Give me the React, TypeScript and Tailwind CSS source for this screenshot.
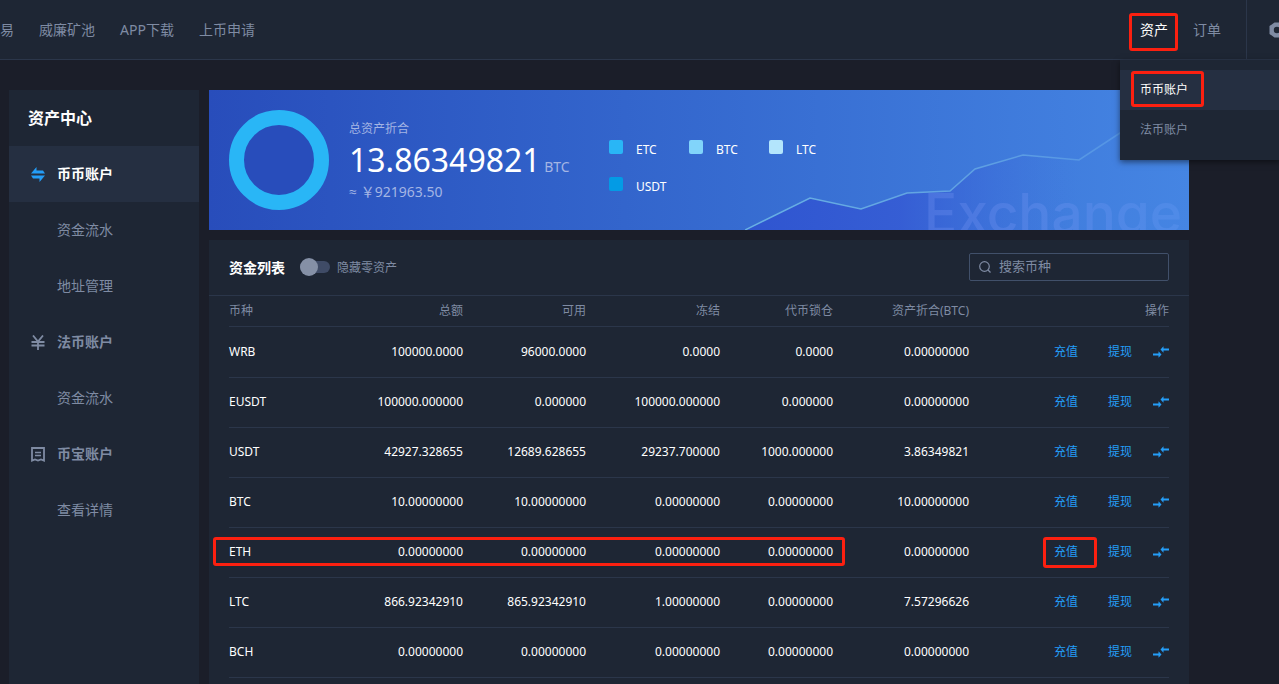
const navLinks = ["易", "威廉矿池", "APP下载", "上币申请"];

type Asset = { coin: string; values: string[]; marked?: boolean };

const assets: Asset[] = [
  { coin: "WRB", values: ["100000.0000", "96000.0000", "0.0000", "0.0000", "0.00000000"] },
  { coin: "EUSDT", values: ["100000.000000", "0.000000", "100000.000000", "0.000000", "0.00000000"] },
  { coin: "USDT", values: ["42927.328655", "12689.628655", "29237.700000", "1000.000000", "3.86349821"] },
  { coin: "BTC", values: ["10.00000000", "10.00000000", "0.00000000", "0.00000000", "10.00000000"] },
  { coin: "ETH", values: ["0.00000000", "0.00000000", "0.00000000", "0.00000000", "0.00000000"], marked: true },
  { coin: "LTC", values: ["866.92342910", "865.92342910", "1.00000000", "0.00000000", "7.57296626"] },
  { coin: "BCH", values: ["0.00000000", "0.00000000", "0.00000000", "0.00000000", "0.00000000"] },
];

const legend = [
  { name: "ETC", color: "bg-[#29b6f6]" },
  { name: "BTC", color: "bg-[#81d4fa]" },
  { name: "LTC", color: "bg-[#b3e5fc]" },
  { name: "USDT", color: "bg-[#039be5]" },
];

const headings = ["总额", "可用", "冻结", "代币锁仓", "资产折合(BTC)", "操作"];

function SwapIcon() {
  return (
    <svg viewBox="0 0 14 15" className="h-[15px] w-[14px]" fill="currentColor" aria-hidden="true">
      <path d="M0 6.5 5.5 0V3.5H12L14 6.5Z" />
      <path d="M14 8.5 8.5 15V11.5H2L0 8.5Z" />
    </svg>
  );
}

function YuanIcon() {
  return (
    <svg viewBox="0 0 14 15" className="h-[15px] w-[14px]" fill="none" stroke="currentColor" strokeWidth="1.8" aria-hidden="true">
      <path d="M2 .5 7 6.5 12 .5M7 6.5V15M.5 7H13.5M.5 10.5H13.5" />
    </svg>
  );
}

function ReceiptIcon() {
  return (
    <svg viewBox="0 0 14 15" className="h-[15px] w-[14px]" fill="none" stroke="currentColor" strokeWidth="1.8" aria-hidden="true">
      <path d="M1 1H13V13.6L10 12.4 7 13.6 4 12.4 1 13.6Z" />
      <path d="M4 5.5H10M4 8.5H10" strokeWidth="1.3" />
    </svg>
  );
}

function TransferIcon() {
  return (
    <svg viewBox="0 0 16 12" className="h-3 w-4" fill="currentColor" aria-hidden="true">
      <path d="M7.5 3.5 10.5 .3V2.5H16V4.5H10.5V6.7Z" />
      <path d="M8.5 8.5 5.5 5.3V7.5H0V9.5H5.5V11.7Z" />
    </svg>
  );
}

const menu = [
  { label: "币币账户", icon: <SwapIcon />, active: true },
  { label: "资金流水" },
  { label: "地址管理" },
  { label: "法币账户", icon: <YuanIcon /> },
  { label: "资金流水" },
  { label: "币宝账户", icon: <ReceiptIcon /> },
  { label: "查看详情" },
];

function Mark({ className }: { className: string }) {
  return <span className={`pointer-events-none absolute rounded-[3px] border-3 border-[#fc2010] ${className}`} />;
}

function Header() {
  return (
    <header className="relative z-10 flex h-[60px] items-stretch justify-between border-b border-[#2b364a] bg-[#1e2634] text-sm text-[#7f8ba3]">
      <nav className="flex items-center gap-[25px]">
        {navLinks.map((label) => (
          <a key={label} href="#">{label}</a>
        ))}
      </nav>
      <div className="flex">
        <div className="relative flex items-center">
          <Mark className="top-[13px] -left-[11px] h-[38px] w-[49px]" />
          <a href="#" className="text-white">资产</a>
          <div className="absolute top-[60px] -left-5 w-[160px] bg-[#1e2634] py-[10px] text-xs shadow-[0_2px_6px_rgba(0,0,0,0.5)]">
            <a href="#" className="relative flex h-10 items-center bg-[#252f41] px-5 text-white">
              <Mark className="top-px left-[11px] h-9 w-[73px]" />
              币币账户
            </a>
            <a href="#" className="flex h-10 items-center px-5">法币账户</a>
          </div>
        </div>
        <a href="#" className="flex items-center px-[25px]">订单</a>
        <button type="button" aria-label="设置" className="flex w-[33px] items-center overflow-hidden border-l border-[#2b364a] pl-[22px]">
          <svg viewBox="0 0 16 16" className="h-4 w-4 shrink-0" aria-hidden="true">
            <path fill="currentColor" fillRule="evenodd" d="M5.5 .5H10.5L15.5 4V12L10.5 15.5H5.5L.5 12V4ZM8 4.8A3.2 3.2 0 1 0 8 11.2 3.2 3.2 0 1 0 8 4.8Z" />
          </svg>
        </button>
      </div>
    </header>
  );
}

function Sidebar() {
  return (
    <aside className="w-[190px] shrink-0 bg-[#1e2634]">
      <h1 className="flex h-14 items-center pl-[19px] text-base font-bold text-white">资产中心</h1>
      <nav className="text-sm">
        {menu.map((item, i) => (
          <a
            key={i}
            href="#"
            className={`flex h-14 items-center pl-[22px] ${item.icon ? "font-bold" : ""} ${item.active ? "bg-[#252f41] text-white" : "text-[#7f8ba3]"}`}
          >
            <span className={`mr-3 w-[14px] ${item.active ? "text-[#249df7]" : ""}`}>{item.icon}</span>
            {item.label}
          </a>
        ))}
      </nav>
    </aside>
  );
}

function Summary() {
  return (
    <section className="relative flex h-[140px] items-center overflow-hidden bg-linear-to-r from-[#284dbb] to-[#4585e3] pl-5">
      <svg viewBox="0 0 444 140" className="absolute right-0 bottom-0 h-[140px] w-[444px]" aria-hidden="true">
        <defs>
          <linearGradient id="area" x1="0" x2="1" y1="0" y2="0">
            <stop offset="0" stopColor="#2f55d0" />
            <stop offset="0.35" stopColor="#355bd4" stopOpacity="0.9" />
            <stop offset="0.75" stopColor="#3f70dc" stopOpacity="0" />
          </linearGradient>
          <linearGradient id="line" x1="0" x2="1" y1="0" y2="0">
            <stop offset="0" stopColor="#67b0e4" />
            <stop offset="0.4" stopColor="#62a4e2" />
            <stop offset="1" stopColor="#4f8fe6" />
          </linearGradient>
          <linearGradient id="word" x1="0" x2="1" y1="0" y2="0">
            <stop offset="0" stopColor="#4a72de" />
            <stop offset="0.5" stopColor="#5084e4" />
            <stop offset="1" stopColor="#4f8be8" />
          </linearGradient>
        </defs>
        <path d="M0 140 65 108 116 119 162 103 205 101 230 79 278 65 334 70 375 43 444 0V140Z" fill="url(#area)" />
        <path d="M0 140 65 108 116 119 162 103 205 101 230 79 278 65 334 70 375 43 444 0" fill="none" stroke="url(#line)" strokeWidth="1.5" />
        <text x="179" y="143" fill="url(#word)" className="font-['Inter'] text-[55px] font-medium">Exchange</text>
      </svg>
      <svg viewBox="0 0 100 100" className="relative h-[100px] w-[100px] shrink-0" aria-hidden="true">
        <circle cx="50" cy="50" r="42.5" fill="#284dbb" stroke="#29b6f6" strokeWidth="15" />
      </svg>
      <div className="relative ml-5 w-[260px] shrink-0 text-[#a4b5e4]">
        <p className="text-xs leading-4">总资产折合</p>
        <p className="pt-[6px] text-sm leading-[34px]">
          <span className="text-[32px] text-white">13.86349821</span> BTC
        </p>
        <p className="text-sm leading-4"><span className="font-['Open_Sans']">≈</span> ￥921963.50</p>
      </div>
      <ul className="relative mt-3 grid grid-cols-[80px_80px_80px] gap-y-[17px] text-xs text-white">
        {legend.map((item) => (
          <li key={item.name} className="flex h-5 items-end gap-[13px] leading-4">
            <span className={`mb-1 h-[14px] w-[14px] rounded-[2px] ${item.color}`} />
            {item.name}
          </li>
        ))}
      </ul>
    </section>
  );
}

function AssetTable() {
  return (
    <table className="w-full table-fixed border-separate border-spacing-0 text-xs">
      <colgroup>
        <col className="w-[117px]" />
        <col className="w-[117px]" />
        <col className="w-[123px]" />
        <col className="w-[134px]" />
        <col className="w-[113px]" />
        <col className="w-[136px]" />
        <col className="w-[200px]" />
      </colgroup>
      <thead>
        <tr className="h-[31px] text-[#7f8ba3] *:border-b *:border-[#2b364a] *:p-0 *:font-normal">
          <th className="text-left">币种</th>
          {headings.map((label) => (
            <th key={label} className="text-right">{label}</th>
          ))}
        </tr>
      </thead>
      <tbody>
        {assets.map((asset) => (
          <tr key={asset.coin} className="relative h-[50px] text-white first:h-[51px] *:border-b *:border-[#2b364a] *:px-0 *:pt-0 *:pb-px">
            <td>
              {asset.coin}
              {asset.marked && <Mark className="top-[9px] -left-4 h-[29px] w-[632px]" />}
            </td>
            {asset.values.map((value, i) => (
              <td key={i} className="text-right">{value}</td>
            ))}
            <td>
              <div className="flex items-center justify-end text-[#249df7]">
                <a href="#" className="relative mr-[30px]">
                  {asset.marked && <Mark className="-top-[7px] -left-[11px] h-[31px] w-[54px]" />}
                  充值
                </a>
                <a href="#" className="mr-[21px]">提现</a>
                <button type="button" aria-label="划转"><TransferIcon /></button>
              </div>
            </td>
          </tr>
        ))}
      </tbody>
    </table>
  );
}

function AssetPanel() {
  return (
    <section className="flex-1 bg-[#1e2634]">
      <div className="flex h-14 items-center border-b border-[#2b364a] px-5">
        <h2 className="mr-[15px] text-sm font-bold text-white">资金列表</h2>
        <label className="flex items-center gap-[7px] text-xs text-[#7f8ba3]">
          <span className="relative mb-0.5 flex h-[18px] w-[30px] items-center">
            <input type="checkbox" className="peer h-3 w-full appearance-none rounded-full bg-[#3f4b66]" />
            <span className="absolute left-0 h-[18px] w-[18px] rounded-full bg-[#8590a6] peer-checked:left-3" />
          </span>
          隐藏零资产
        </label>
        <label className="mb-0.5 ml-auto flex h-7 w-[200px] items-center gap-2 rounded-[2px] border border-[#41506a] px-[9px] text-[#7f8ba3]">
          <svg viewBox="0 0 12 12" className="h-3 w-3 shrink-0" fill="none" stroke="currentColor" strokeWidth="1.2" aria-hidden="true">
            <circle cx="5.5" cy="5.5" r="4.8" />
            <path d="M9 9 11.5 11.5" />
          </svg>
          <input type="text" aria-label="搜索币种" placeholder="搜索币种" className="w-full min-w-0 bg-transparent text-[13px] outline-none placeholder:text-[#7f8ba3]" />
        </label>
      </div>
      <div className="px-5">
        <AssetTable />
      </div>
    </section>
  );
}

export default function App() {
  return (
    <div className="flex min-h-screen flex-col overflow-x-clip bg-[#1b1e29] font-['Noto_Sans','Noto_Sans_CJK_SC',sans-serif]">
      <Header />
      <div className="flex flex-1 gap-[10px] pt-[30px] pr-[90px] pl-[9px]">
        <Sidebar />
        <main className="flex min-w-0 flex-1 flex-col gap-[10px]">
          <Summary />
          <AssetPanel />
        </main>
      </div>
    </div>
  );
}
